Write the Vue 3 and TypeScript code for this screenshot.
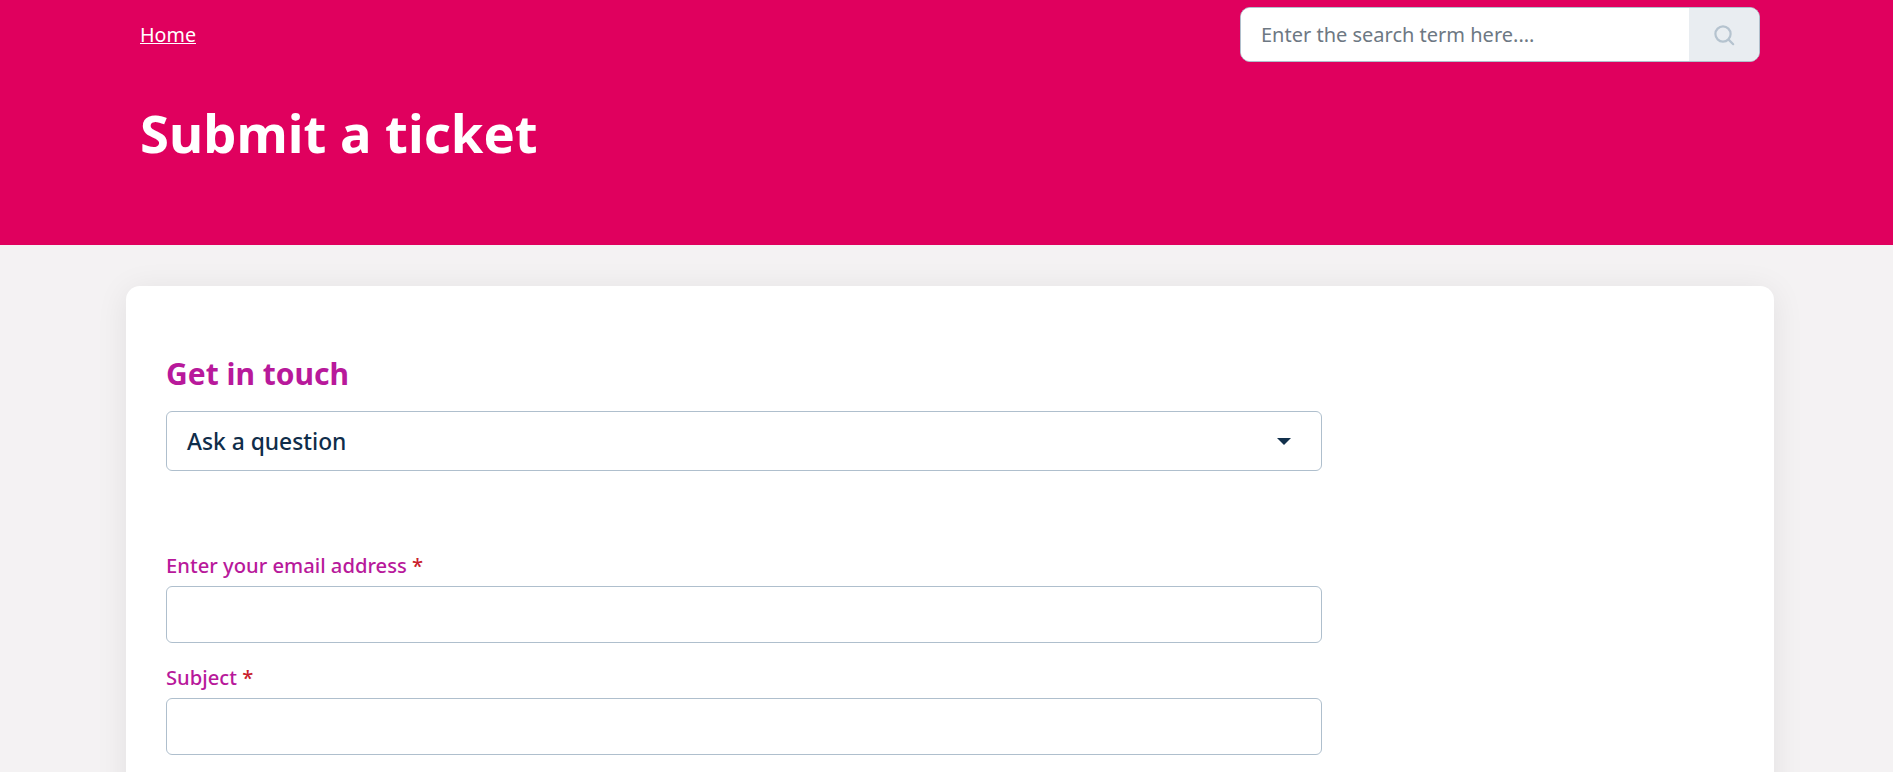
<template>
  <div class="page">
    <header class="hero">
      <div class="hero-top">
        <a class="crumb" href="#">Home</a>
        <form class="search" @submit.prevent>
          <input v-model="term" type="text" placeholder="Enter the search term here...." />
          <button type="submit" aria-label="Search">
            <svg width="22" height="22" viewBox="0 0 22 22" fill="none" stroke="#b5c3cf" stroke-width="2.2">
              <circle cx="10" cy="10" r="7.6" />
              <path d="M15.6 15.6L20.2 20.2" stroke-linecap="round" />
            </svg>
          </button>
        </form>
      </div>
      <h1>Submit a ticket</h1>
    </header>
    <main class="content">
      <section class="card">
        <h2>Get in touch</h2>
        <div class="select">
          <span>Ask a question</span>
          <i class="caret"></i>
        </div>
        <div v-for="field in fields" :key="field" class="field">
          <label>{{ field }} <b>*</b></label>
          <input type="text" />
        </div>
      </section>
    </main>
  </div>
</template>

<script setup lang="ts">
import { ref } from "vue";

const term = ref("");
const fields = ["Enter your email address", "Subject"];
</script>

<style>
html,
body {
  margin: 0;
  overflow: hidden;
}
</style>

<style scoped>
.page {
  height: 100vh;
  overflow: hidden;
  background: #f4f2f3;
  font-family: "Noto Sans", "Open Sans", sans-serif;
}
.hero {
  height: 245px;
  box-sizing: border-box;
  padding: 7px 133px 0 140px;
  background: #e0005e;
  color: #fff;
}
.hero-top {
  display: flex;
  justify-content: space-between;
  align-items: flex-start;
}
.crumb {
  margin-top: 14px;
  font-size: 19.7px;
  line-height: 27px;
  color: #fff;
}
.search {
  display: flex;
  width: 520px;
  height: 55px;
  box-sizing: border-box;
  border: 1px solid #b0bfcc;
  border-radius: 10px;
  overflow: hidden;
  background: #fff;
}
.search input {
  flex: 1;
  min-width: 0;
  border: 0;
  outline: 0;
  padding: 0 20px;
  font: inherit;
  font-size: 20px;
  color: #5f6f7e;
}
.search input::placeholder {
  color: #6d7883;
  opacity: 1;
}
.search button {
  width: 70px;
  border: 0;
  padding: 0;
  background: #e9edf1;
  display: flex;
  align-items: center;
  justify-content: center;
}
h1 {
  margin: 33px 0 0;
  font-size: 52.6px;
  line-height: 76px;
  font-weight: 700;
}
.content {
  padding: 41px 119px 0 126px;
}
.card {
  height: 600px;
  box-sizing: border-box;
  padding: 69px 40px 0;
  background: #fff;
  border-radius: 14px;
  box-shadow: 0 4px 32px rgba(0, 0, 0, 0.08);
}
h2 {
  margin: 0;
  font-size: 30px;
  line-height: 38px;
  font-weight: 700;
  color: #b8199b;
}
.select {
  display: flex;
  align-items: center;
  justify-content: space-between;
  width: 1156px;
  height: 60px;
  margin-top: 18px;
  padding: 0 30px 0 20px;
  box-sizing: border-box;
  border: 1px solid #afbfcd;
  border-radius: 6px;
  font-size: 22.8px;
  font-weight: 500;
  color: #0f2d4a;
}
.caret {
  width: 0;
  height: 0;
  border: 7.5px solid transparent;
  border-top-color: #12304c;
  border-bottom: 0;
}
.field {
  width: 1156px;
  display: flex;
  flex-direction: column;
}
.select + .field {
  margin-top: 81px;
}
.field + .field {
  margin-top: 21px;
}
label {
  font-size: 20.2px;
  line-height: 27px;
  font-weight: 500;
  color: #b8199b;
  margin-bottom: 7px;
}
label b {
  color: #c9202b;
  font-weight: 500;
}
.field input {
  height: 57px;
  box-sizing: border-box;
  border: 1px solid #afbfcd;
  border-radius: 6px;
  outline: 0;
  background: #fff;
}
</style>
